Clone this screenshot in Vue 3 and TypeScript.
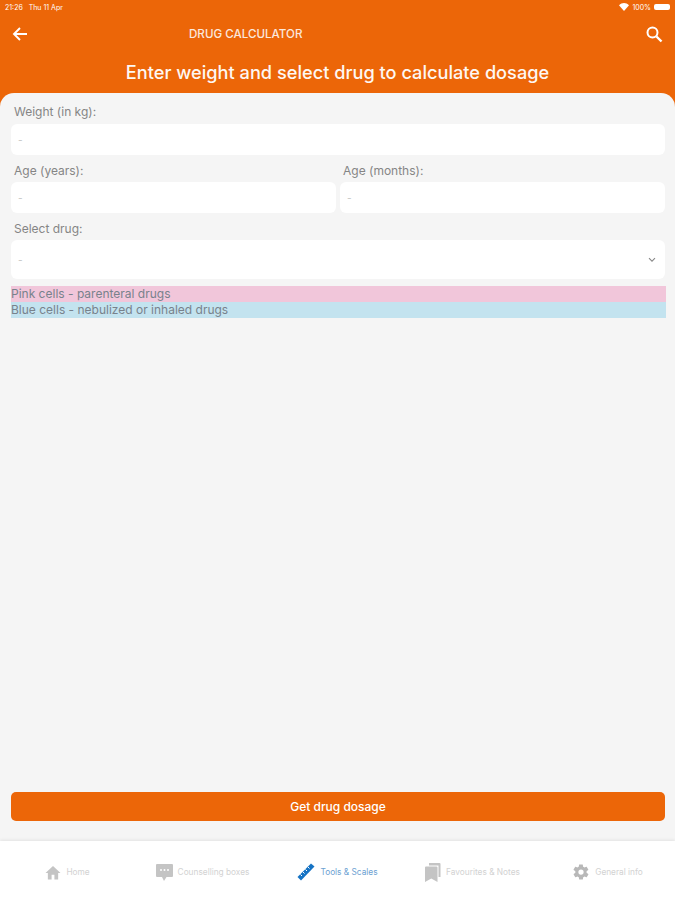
<script setup lang="ts">
interface Tab { label: string; icon: string; active?: boolean }
const tabs: Tab[] = [
  { label: 'Home', icon: 'home' },
  { label: 'Counselling boxes', icon: 'chat' },
  { label: 'Tools & Scales', icon: 'ruler', active: true },
  { label: 'Favourites & Notes', icon: 'book' },
  { label: 'General info', icon: 'gear' },
]
</script>

<template>
  <div class="page">
    <header class="head">
      <div class="status">
        <span class="time">21:26&nbsp;&nbsp;&nbsp;Thu 11 Apr</span>
        <span class="stat-right">
          <svg width="10" height="8" viewBox="0 0 10 8"><path d="M0 2.2C3 -.6 7 -.6 10 2.2L5 8Z" fill="#fff" /></svg>
          <span>100%</span>
          <span class="battery"></span>
        </span>
      </div>
      <div class="nav">
        <svg class="ic" width="16" height="16" viewBox="0 0 16 16" fill="none" stroke="#fff" stroke-width="1.9"><path d="M15 8H2M8 2 2 8l6 6" /></svg>
        <span class="nav-title">DRUG CALCULATOR</span>
        <svg class="ic" width="18" height="18" viewBox="0 0 18 18" fill="none" stroke="#fff" stroke-width="2"><circle cx="7.5" cy="7.5" r="5" /><path d="m11.5 11.5 5 5" stroke-width="2.4" /></svg>
      </div>
      <h1 class="title">Enter weight and select drug to calculate dosage</h1>
    </header>

    <main class="card">
      <div class="form">
        <label class="lbl">Weight (in kg):</label>
        <div class="field">-</div>
        <div class="two">
          <div class="col">
            <label class="lbl">Age (years):</label>
            <div class="field">-</div>
          </div>
          <div class="col">
            <label class="lbl">Age (months):</label>
            <div class="field">-</div>
          </div>
        </div>
        <label class="lbl">Select drug:</label>
        <div class="field select">
          <span>-</span>
          <svg width="8" height="6" viewBox="0 0 8 6" fill="none" stroke="#888" stroke-width="1.1"><path d="m1 1.2 3 3 3-3" /></svg>
        </div>
        <div class="legend">
          <div class="pink">Pink cells - parenteral drugs</div>
          <div class="blue">Blue cells - nebulized or inhaled drugs</div>
        </div>
      </div>
      <button class="cta" type="button">Get drug dosage</button>
    </main>

    <nav class="tabs">
      <div v-for="t in tabs" :key="t.label" class="tab" :class="{ on: t.active }">
        <svg v-if="t.icon === 'home'" width="16" height="15" viewBox="0 0 17 16" fill="#c4c4c4"><path d="M8.5 1 0.5 8.5H3V15.5H7V10.5H10V15.5H14V8.5H16.5Z" /></svg>
        <svg v-else-if="t.icon === 'chat'" width="17" height="17" viewBox="0 0 17 17" fill="#c4c4c4"><path d="M1 0H16a1 1 0 0 1 1 1V12a1 1 0 0 1-1 1H10.5L8 17 6 13H1a1 1 0 0 1-1-1V1a1 1 0 0 1 1-1Z" /><g fill="#fff"><circle cx="5" cy="6" r="1" /><circle cx="8.500" cy="6" r="1" /><circle cx="12" cy="6" r="1" /></g></svg>
        <svg v-else-if="t.icon === 'ruler'" width="18" height="18" viewBox="0 0 18 18"><path d="M0.500 14 14 0.500 17.500 3.500 4 17.500Z" fill="#1673c4" /><path d="M3.500 11.500l1.500 1.500M6 9l1.500 1.500M8.500 6.500 10 8M11 4l1.500 1.500" stroke="#fff" stroke-width="1" /></svg>
        <svg v-else-if="t.icon === 'book'" width="16" height="19" viewBox="0 0 16 19" fill="#c4c4c4"><path d="M4 0H14.500a1 1 0 0 1 1 1V14H13.500V2.500H4Z" /><path d="M1 3.500H11.500a1 1 0 0 1 1 1V19L6.300 15.500 0 19V4.500a1 1 0 0 1 1-1Z" /></svg>
        <svg v-else width="18" height="18" viewBox="0 0 24 24" fill="#b8b8b8"><path d="M19.400 13c.1-.3.1-.7.1-1s0-.7-.1-1l2.200-1.700c.2-.2.200-.4.100-.6l-2-3.500c-.1-.2-.4-.3-.6-.2l-2.600 1c-.5-.4-1.100-.7-1.700-1l-.4-2.700c0-.2-.2-.4-.5-.4h-4c-.3 0-.5.200-.5.400l-.4 2.700c-.6.300-1.200.6-1.700 1l-2.600-1c-.2-.1-.5 0-.6.200l-2 3.500c-.1.200-.1.400.1.600L4.500 11c-.1.300-.1.700-.1 1s0 .7.100 1l-2.200 1.700c-.2.200-.2.400-.1.600l2 3.500c.1.200.4.300.6.200l2.600-1c.5.400 1.100.7 1.700 1l.4 2.700c0 .2.200.4.500.4h4c.3 0 .5-.2.500-.4l.4-2.700c.6-.3 1.200-.6 1.700-1l2.600 1c.2.100.5 0 .6-.2l2-3.500c.1-.2.100-.4-.1-.6ZM12 15.500a3.500 3.500 0 1 1 0-7 3.500 3.500 0 0 1 0 7Z" /></svg>
        <span>{{ t.label }}</span>
      </div>
    </nav>
  </div>
</template>

<style scoped>
.page {
  width: 675px;
  height: 900px;
  display: flex;
  flex-direction: column;
  background: #ec6608;
  font-family: Inter, "Liberation Sans", sans-serif;
  overflow: hidden;
}
.head { height: 93px; color: #fff; flex: none; }
.status {
  height: 14px;
  padding: 0 5px;
  display: flex;
  align-items: center;
  justify-content: space-between;
  font-size: 7px;
}
.stat-right { display: flex; align-items: center; gap: 3px; }
.battery { width: 16px; height: 6px; background: #fff; border-radius: 2px; }
.nav {
  height: 39px;
  padding: 0 12px;
  display: flex;
  align-items: center;
  justify-content: space-between;
}
.nav-title {
  flex: 1;
  margin-left: 161px;
  font-size: 11.6px;
  font-weight: 500;
  opacity: 0.85;
}
.title {
  margin: 6px 0 0;
  text-align: center;
  font-size: 18.2px;
  line-height: 26px;
  font-weight: 500;
  opacity: 0.95;
}
.card {
  flex: 1;
  background: #f5f5f5;
  border-radius: 14px 14px 0 0;
  display: flex;
  flex-direction: column;
  justify-content: space-between;
  padding: 0 10px 20px 11px;
}
.form { display: flex; flex-direction: column; }
.lbl {
  display: block;
  height: 31px;
  padding: 11px 0 0 3px;
  box-sizing: border-box;
  font-size: 12px;
  line-height: 16px;
  color: #858585;
}
.field {
  height: 31px;
  background: #fff;
  border-radius: 6px;
  padding: 0 7px;
  display: flex;
  align-items: center;
  font-size: 10px;
  color: #c4c4c4;
}
.two { display: flex; gap: 4px; margin-top: -4px; }
.col { flex: 1; min-width: 0; }
.two .lbl { padding-top: 12px; }
.form > .lbl:nth-of-type(2) { margin-top: -4px; padding-top: 12px; }
.select { height: 39px; justify-content: space-between; padding-right: 9px; }
.legend {
  margin: 7px -1px 0 0;
  font-size: 12px;
  line-height: 16px;
  color: #78828c;
}
.pink { background: #f1c6da; height: 16px; }
.blue { background: #c3e3ef; height: 16px; }
.cta {
  height: 29px;
  border: 0;
  border-radius: 5px;
  background: #ec6608;
  color: #fff;
  font: 500 12px Inter, "Liberation Sans", sans-serif;
  padding: 0;
}
.tabs {
  height: 59px;
  flex: none;
  background: #fff;
  box-shadow: 0 -1px 3px rgba(0, 0, 0, 0.08);
  display: grid;
  grid-template-columns: repeat(5, 1fr);
  padding-top: 3px;
  box-sizing: border-box;
  position: relative;
}
.tab {
  display: flex;
  align-items: center;
  justify-content: center;
  gap: 5px;
  font-size: 8.3px;
  color: #d2d2d2;
}
.tab.on { color: #6c9fd2; }
</style>

<style>
body { margin: 0; }
</style>
